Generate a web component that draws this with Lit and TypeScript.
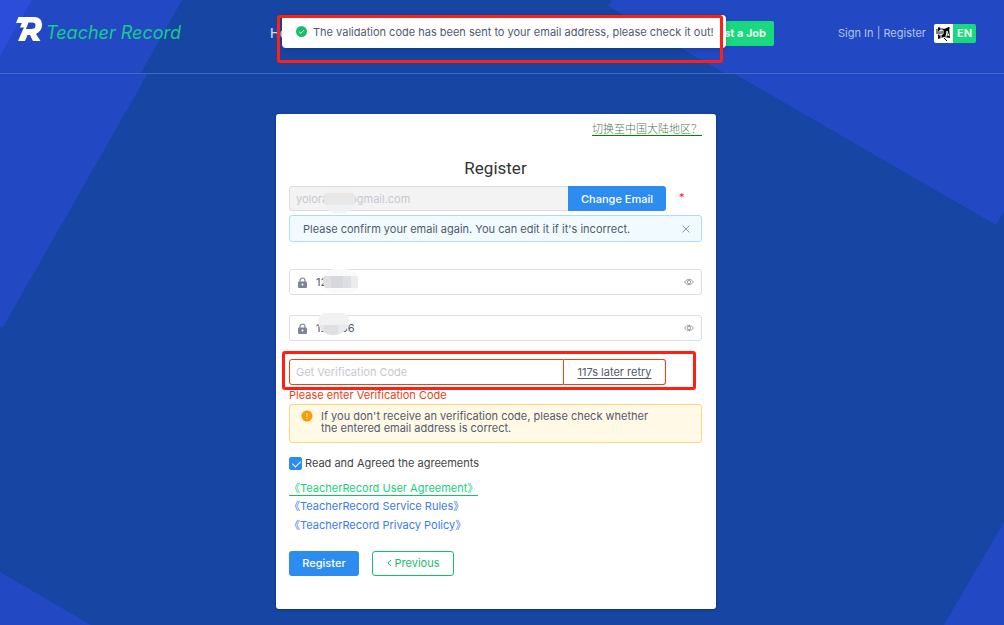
import { LitElement, html, css, svg } from "lit";
import { customElement, state } from "lit/decorators.js";

const logoMark = svg`<path fill="#fff" fill-rule="evenodd" d="M2.500 0H18Q26 0 26 7.5Q26 14 20 17L24.500 24H17L14 18H11.500L9 24H2L7 12.500L8 10.500H4L5.800 6H0ZM12.500 5.500L10 12H15Q19.500 12 19.500 8.500Q19.500 5.500 16.500 5.500Z"/>`;

@customElement("app-root")
export class AppRoot extends LitElement {
  @state() private agreed = true;
  @state() private hintOpen = true;

  static styles = css`
    :host {
      display: block;
      position: relative;
      min-height: 100vh;
      overflow: hidden;
      background: #1645a3;
      color: #515a6e;
      font: 11px/16px Inter, "Noto Sans CJK SC", sans-serif;
    }
    * { box-sizing: border-box; }
    .backdrop { position: absolute; inset: 0; width: 100%; height: 100%; }
    a { color: inherit; text-decoration: none; }
    button, input { font: inherit; color: inherit; margin: 0; }
    button { cursor: pointer; }

    .header {
      position: relative;
      display: flex;
      align-items: center;
      height: 74px;
      padding: 0 28px 7px 16px;
      border-bottom: 1px solid #4069bf;
      color: #b3c2e8;
    }
    .brand { display: flex; align-items: center; width: 254px; }
    .brand svg { width: 26px; height: 24px; margin: 0 4px 9px 0; }
    .brand-name { font: italic 18px/22px Inter, sans-serif; color: #16cc8a; white-space: nowrap; }
    .nav { flex: 1; display: flex; align-items: center; justify-content: space-between; font-size: 13px; font-weight: 500; }
    .nav a { color: #d4dcf2; }
    .nav .post { padding: 0 8px; line-height: 25px; font-size: 11px; border-radius: 2px; background: #19d97f; color: #e9fff4; font-weight: 700; }
    .account { display: flex; align-items: center; margin-left: 64px; white-space: pre; }
    .lang { display: flex; margin-left: 8px; padding: 0; border: 0; border-radius: 2px; overflow: hidden; background: #19d97f; color: #e9fff4; font-weight: 700; line-height: 19px; }
    .lang svg { width: 19px; height: 19px; background: #fff; }
    .lang span { width: 23px; text-align: center; }

    .toast {
      position: absolute;
      z-index: 2;
      top: 15px;
      left: 282px;
      display: flex;
      align-items: center;
      width: 444px;
      height: 33px;
      padding: 0 14px;
      gap: 6px;
      border-radius: 4px;
      background: #fff;
      box-shadow: 0 1px 6px #0003;
      white-space: nowrap;
    }
    .toast svg { flex: none; width: 11px; height: 11px; }

    .mark { position: absolute; z-index: 3; border: 3px solid #ff2014; border-radius: 3px; pointer-events: none; }
    .mark-toast { top: 15px; left: 277px; width: 446px; height: 48px; }
    .mark-code { top: -8px; left: -7px; width: 414px; height: 39px; }

    .main { position: relative; display: flex; justify-content: center; padding: 40px 12px 16px 0; }
    .card {
      width: 440px;
      padding: 7px 14px 33px 13px;
      border-radius: 3px;
      background: #fff;
      box-shadow: 0 1px 3px #0004;
    }
    .region { display: flex; justify-content: flex-end; font: 11px/14px "Noto Sans CJK SC", sans-serif; font-weight: 300; color: #4a7a4a; }
    .region a { border-bottom: 1px solid #078007; }
    h1 { margin: 21px 0 7px; font: 17px/22px Roboto, sans-serif; text-align: center; color: #333; }

    .row { position: relative; display: flex; padding-right: 36px; }
    .row input { flex: 1; min-width: 0; height: 25px; padding: 0 6px; border: 1px solid #dcdee2; border-radius: 3px 0 0 3px; outline: 0; }
    .row input:disabled { background: #f3f3f3; color: #c5c8ce; border-right: 0; opacity: 1; }
    .row input::placeholder { color: #c5c8ce; opacity: 1; }
    .row button { width: 98px; padding: 0; border: 0; border-radius: 0 3px 3px 0; background: #2d8cf0; color: #fff; font-weight: 500; }
    .required { position: absolute; left: 390px; top: 3px; color: #ff2014; }

    .alert { display: flex; border: 1px solid #abdcff; border-radius: 3px; background: #f0faff; }
    .info { height: 27px; margin-top: 4px; padding: 0 10px 0 13px; align-items: center; justify-content: space-between; }
    .info button { display: flex; padding: 0; border: 0; background: none; }
    .info svg { width: 10px; height: 10px; }
    .warning { border-color: #ffd77a; background: #fff9e6; padding: 5px 11px 8px; gap: 8px; line-height: 12px; }
    .warning svg { width: 12px; height: 12px; flex: none; }
    .warning p { margin: 0; max-width: 344px; }

    .secret { position: relative; display: flex; align-items: center; height: 26px; padding: 0 7px 0 8px; border: 1px solid #dcdee2; border-radius: 3px; }
    .secret + .secret { margin-top: 20px; }
    .secrets { margin: 27px 0 18px; }
    .secret input { flex: 1; min-width: 0; height: 22px; padding: 0; border: 0; outline: 0; background: none; }
    .secret button { display: flex; padding: 0; border: 0; background: none; }
    .lock { width: 9px; height: 11px; margin-right: 9px; }
    .eye { width: 10px; height: 8px; }

    .mosaic { position: absolute; overflow: hidden; }
    .mosaic-email { left: 35px; top: 1px; width: 31px; height: 26px; border-radius: 14px; background: linear-gradient(#f2f2f2 6px, #e8e8e9 6px 18px, #eff2f5 18px); }
    .mosaic-first { left: 33px; top: -1px; width: 35px; height: 24px; border-radius: 12px 12px 8px 12px; background: linear-gradient(#fafafa 7px, transparent 7px 19px, #fafafa 19px), linear-gradient(90deg, #dfdfe2 8px, #d7d8dc 8px 20px, #dedfe2 20px 28px, #ebecee 28px); }
    .mosaic-second { left: 28px; top: -3px; width: 31px; height: 22px; border-radius: 8px 8px 15px 15px; background: linear-gradient(#f0f1f2 12px, transparent 12px), linear-gradient(90deg, #e7e7e9 6px, #dfdfe2 6px 20px, #e8e9eb 20px); }

    .code input { height: 26px; border-color: #ed4014; }
    .code button { width: 102px; border: 1px solid #ed4014; border-left: 0; background: #fff; color: #515a6e; font-weight: 400; text-decoration: underline; text-underline-offset: 2px; }
    .error { padding: 2px 0 1px; color: #ed4014; }

    .agree { display: flex; align-items: center; gap: 3px; margin-top: 12px; color: #444; }
    .agree input { appearance: none; display: grid; width: 13px; height: 13px; border: 1px solid #2d8cf0; border-radius: 2px; background: #fff; }
    .agree input:checked { background: #2d8cf0; }
    .agree input:checked::after { content: ""; width: 4px; height: 7px; margin: 1px 0 0 4px; border: solid #fff; border-width: 0 1px 1px 0; transform: rotate(45deg); }
    .documents { display: grid; justify-items: start; gap: 2px; margin: 10px 0 17px; padding: 0; list-style: none; color: #3d7bea; }
    .documents a { display: block; line-height: 17px; }
    .documents .current { color: #19d07e; line-height: 14px; border-bottom: 1px solid #19be6b; }
    .actions { display: flex; gap: 13px; }
    .actions button { height: 25px; padding: 0 13px 2px; border-radius: 3px; }
    .submit { width: 70px; border: 0; background: #2d8cf0; color: #fff; font-weight: 500; }
    .previous { display: flex; align-items: center; justify-content: center; gap: 3px; width: 82px; border: 1px solid #19be6b; background: #fff; color: #19be6b; }
    .previous svg { width: 5px; height: 8px; }
  `;

  private secretField(label: string, mosaic: string) {
    return html`<div class="secret">
      <svg class="lock" viewBox="0 0 9 11"><path d="M2 5V3.500A2.500 2.500 0 0 1 7 3.500V5" fill="none" stroke="#808695" stroke-width="1.200"/><rect y="4.500" width="9" height="6.500" rx="1" fill="#808695"/><circle cx="4.500" cy="7.500" r="1" fill="#fff"/></svg>
      <input type="text" aria-label=${label} .value=${"123456"} />
      <button type="button" aria-label="Toggle visibility"><svg class="eye" viewBox="0 0 10 8"><path d="M.5 4Q5-1.500 9.500 4Q5 9.500.5 4Z" fill="none" stroke="#9a9fac"/><circle cx="5" cy="4" r="1.600" fill="none" stroke="#9a9fac"/></svg></button>
      <span class="mosaic ${mosaic}"></span>
    </div>`;
  }

  render() {
    return html`
      <svg class="backdrop" viewBox="0 0 1004 625" preserveAspectRatio="none" aria-hidden="true">
        <g fill="#2249c3">
          <path d="M0 0H182L141 73H148L3 327H0Z"/>
          <path d="M612 0L608 6L724 73H733L996 225L1004 211V0Z"/>
          <path d="M0 572L91 625H0Z"/>
          <path d="M1004 522L944 625H1004Z"/>
        </g>
        <path d="M0 0H32L0 56Z" fill="#2b4dd9"/>
      </svg>

      <header class="header">
        <a class="brand" href="#"><svg viewBox="0 0 26 24" aria-hidden="true">${logoMark}</svg><span class="brand-name">Teacher Record</span></a>
        <nav class="nav"><a href="#">Home</a><a class="post" href="#">Post a Job</a></nav>
        <div class="account"><a href="#">Sign In</a> | <a href="#">Register</a><button class="lang"><svg viewBox="0 0 19 19" aria-hidden="true"><path d="M4 3L10 5L15 3L16 14L10 13L4 15Z"/><path d="M5 7L9 6V10L5 11ZM7 4V14M12 13L13 7L15 12M12 11H15M4 3L6 2M12 16L14 17" stroke="#fff" fill="none"/><path d="M3 5V10M15 3V5M10 14L13 17" stroke="#000" fill="none"/></svg><span>EN</span></button></div>
      </header>

      <div class="toast" role="status"><svg viewBox="0 0 12 12" aria-hidden="true"><circle cx="6" cy="6" r="6" fill="#19be6b"/><path d="M3.500 6.200L5.300 8L8.700 4.400" fill="none" stroke="#fff"/></svg>The validation code has been sent to your email address, please check it out!</div>
      <div class="mark mark-toast"></div>

      <main class="main">
        <form class="card" @submit=${(e: Event) => e.preventDefault()}>
          <div class="region"><a href="#">切换至中国大陆地区？</a></div>
          <h1>Register</h1>
          <div class="row">
            <input type="email" aria-label="Email" disabled .value=${"yoloraxxx@gmail.com"} />
            <button type="button">Change Email</button>
            <span class="required">*</span>
            <span class="mosaic mosaic-email"></span>
          </div>
          ${this.hintOpen
            ? html`<div class="alert info"><span>Please confirm your email again. You can edit it if it's incorrect.</span>
            <button type="button" aria-label="Close" @click=${() => (this.hintOpen = false)}><svg viewBox="0 0 10 10"><path d="M1.500 1.500L8.500 8.500M8.500 1.500L1.500 8.500" stroke="#999"/></svg></button></div>`
            : null}
          <div class="secrets">
            ${this.secretField("Password", "mosaic-first")}
            ${this.secretField("Confirm password", "mosaic-second")}
          </div>
          <div class="row code">
            <input type="text" aria-label="Verification code" placeholder="Get Verification Code" />
            <button type="button">117s later retry</button>
            <div class="mark mark-code"></div>
          </div>
          <div class="error">Please enter Verification Code</div>
          <div class="alert warning">
            <svg viewBox="0 0 12 12" aria-hidden="true"><circle cx="6" cy="6" r="5.500" fill="#f90"/><path d="M6 3V7M6 8V9" stroke="#fff"/></svg>
            <p>If you don't receive an verification code, please check whether the entered email address is correct.</p>
          </div>
          <label class="agree"><input type="checkbox" .checked=${this.agreed} @change=${(e: Event) => (this.agreed = (e.target as HTMLInputElement).checked)} />Read and Agreed the agreements</label>
          <ul class="documents">
            <li><a class="current" href="#">《TeacherRecord User Agreement》</a></li>
            <li><a href="#">《TeacherRecord Service Rules》</a></li>
            <li><a href="#">《TeacherRecord Privacy Policy》</a></li>
          </ul>
          <div class="actions">
            <button class="submit">Register</button>
            <button class="previous" type="button"><svg viewBox="0 0 5 8" aria-hidden="true"><path d="M4 1L1 4L4 7" fill="none" stroke="#19be6b"/></svg>Previous</button>
          </div>
        </form>
      </main>
    `;
  }
}
